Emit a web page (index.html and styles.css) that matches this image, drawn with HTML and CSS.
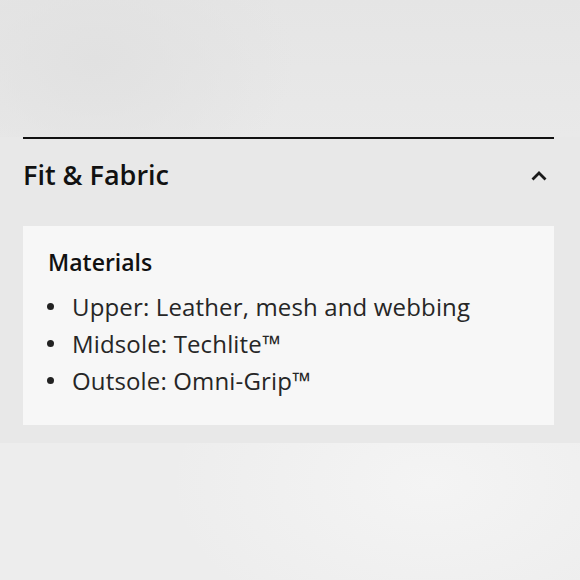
FILE: index.html
```html
<!DOCTYPE html>
<html>
<head>
<meta charset="utf-8">
<link rel="stylesheet" href="styles.css">
</head>
<body>
<div class="page">
  <div class="top"></div>
  <section class="accordion">
    <div class="acc-header">
      <h2 class="acc-title">Fit &amp; Fabric</h2>
      <svg class="chevron" width="16" height="10" viewBox="0 0 16 10"><path d="M1.5 8.5 L8 2 L14.5 8.5" fill="none" stroke="#1a1a1a" stroke-width="2.8"/></svg>
    </div>
    <div class="acc-panel">
      <h3 class="panel-title">Materials</h3>
      <ul class="mat-list">
        <li>Upper: Leather, mesh and webbing</li>
        <li>Midsole: Techlite™</li>
        <li>Outsole: Omni-Grip™</li>
      </ul>
    </div>
  </section>
  <div class="bottom"></div>
</div>
</body>
</html>
```
FILE: styles.css
```css
html, body {
  margin: 0;
  padding: 0;
}
body {
  width: 580px;
  height: 580px;
  overflow: hidden;
  background: #e8e8e8;
  font-family: "Open Sans", Lato, sans-serif;
  color: #1c1c1c;
}
.page {
  display: flex;
  flex-direction: column;
  height: 580px;
}
.top {
  height: 137px;
  background:
    radial-gradient(ellipse 200px 140px at 95px 60px, #e1e1e1, rgba(225,225,225,0)),
    linear-gradient(#e5e5e5, #e9e9e9);
}
.accordion {
  margin: 0 26px 0 23px;
  border-top: 2px solid #111;
  padding-bottom: 18px;
}
.acc-header {
  height: 87px;
  display: flex;
  align-items: center;
  justify-content: space-between;
  padding-right: 7px;
  padding-bottom: 16px;
  box-sizing: border-box;
}
.acc-title {
  margin: 0;
  font-size: 27px;
  font-weight: 600;
  line-height: 36px;
  color: #111;
}
.chevron {
  display: block;
  margin-top: 2px;
}
.acc-panel {
  background: #f7f7f7;
  padding: 20px 25px 26px 25px;
}
.panel-title {
  margin: 0 0 10px 0;
  font-size: 23px;
  font-weight: 600;
  line-height: 32px;
  color: #111;
}
.mat-list {
  list-style: none;
  margin: 0;
  padding: 0;
}
.mat-list li {
  display: flex;
  align-items: center;
  font-size: 24px;
  line-height: 37px;
  letter-spacing: 0.15px;
  color: #262626;
}
.mat-list li::before {
  content: "";
  width: 7px;
  height: 7px;
  border-radius: 50%;
  background: #222;
  margin: 0 18px 0 -1px;
  flex: none;
}
.bottom {
  flex: 1;
  background:
    radial-gradient(ellipse 260px 160px at 430px 40px, #f4f4f4, rgba(243,243,243,0)),
    #ededed;
}
```
